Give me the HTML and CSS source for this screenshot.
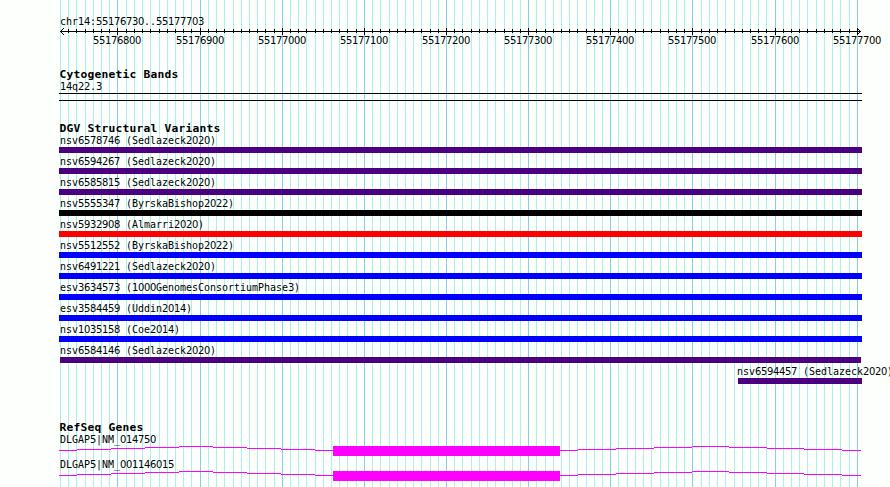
FILE: index.html
```html
<!DOCTYPE html>
<html lang="en">
<head>
<meta charset="utf-8">
<title>chr14:55176730..55177703</title>
<link rel="stylesheet" href="styles.css">
</head>
<body>
<main class="browser">
<svg class="grid" width="890" height="487" aria-hidden="true"><path id="minor" class="minor"/><path id="major" class="major"/></svg>
<section class="ruler">
<div class="label">chr14:55176730..55177703</div>
<svg class="axis" width="803" height="9" viewBox="59 27 803 9"><path id="ticks" class="ink"/><path class="ink" d="M60 31h801v1H60z"/><path class="ink" d="M61 30h1v1h-1zM62 29h1v1h-1zM63 28h1v1h-1zM61 32h1v1h-1zM62 33h1v1h-1zM63 34h1v1h-1zM859 30h1v1h-1zM858 29h1v1h-1zM857 28h1v1h-1zM859 32h1v1h-1zM858 33h1v1h-1zM857 34h1v1h-1z"/></svg>
<div class="scale" id="scale"></div>
</section>
<section class="track cyto">
<h2>Cytogenetic Bands</h2>
<div class="label">14q22.3</div>
<div class="band"></div>
</section>
<section class="track variants">
<h2>DGV Structural Variants</h2>
<div id="variants"></div>
</section>
<section class="track genes">
<h2>RefSeq Genes</h2>
<div id="genes"></div>
</section>
</main>
<script src="app.js"></script>
</body>
</html>
```
FILE: styles.css
```css
body { margin: 0; background: #fdfffc; overflow: hidden; }
.browser { position: relative; width: 890px; height: 487px; overflow: hidden; background: #fdfffc; color: #000; }
.grid { position: absolute; left: 0; top: 0; shape-rendering: crispEdges; }
.minor { fill: #afeeee; }
.major { fill: #87ceeb; }
.ruler, .track { position: relative; margin-left: 59px; width: 831px; }
.ruler { padding-top: 15px; height: 53px; }
.label { height: 12px; padding-left: 1px; font: 10px/12px "DejaVu Sans Mono", monospace; letter-spacing: -0.02px; white-space: pre; transform-origin: 0 10px; transform: translateY(1px) scaleY(1.12); }
.num { font-family: "DejaVu Sans", sans-serif; letter-spacing: -0.362px; }
.axis { display: block; }
.axis, .gene-shape { shape-rendering: crispEdges; }
.ink { fill: #000; }
.scale { display: flex; margin: -2px 0 0 33px; }
.scale .label { flex: none; width: var(--step); }
h2 { margin: 0; height: 12px; padding-left: 0.5px; font: bold 11.3px/12px "DejaVu Sans Mono", monospace; letter-spacing: 0.197px; white-space: pre; transform: translateY(1px); }
.cyto { height: 54px; }
.band { width: 803px; height: 6px; margin-top: 1px; border-top: 1px solid #000; border-bottom: 1px solid #000; }
.variants { height: 299px; }
.variant { height: 21px; }
.variant .label { height: 13px; }
.bar { height: 6px; width: 803px; }
.indigo { background: #4b0082; }
.black { background: #000; }
.red { background: #f00; }
.blue { background: #00f; }
.inset { margin-left: 1px; width: 801px; }
.late { margin-left: 677px; }
.late .label { padding-left: 1px; }
.late .bar { margin-left: 2px; width: 124px; }
.gene { height: 25px; }
.gene .label { height: 13px; }
.gene-shape { display: block; fill: #f0f; }
```
FILE: app.js
```js
const majors = [117, 200, 282, 364, 446, 528, 610, 692, 775, 857];
const minors = [60, 68, 76, 85, 93, 101, 109, 126, 134, 142, 150, 159, 167, 175, 183, 191, 208, 216, 224, 233, 241, 249, 257, 265, 274, 290, 298, 306, 315, 323, 331, 339, 347, 356, 372, 380, 389, 397, 405, 413, 421, 430, 438, 454, 462, 471, 479, 487, 495, 504, 512, 520, 536, 545, 553, 561, 569, 577, 586, 594, 602, 618, 627, 635, 643, 651, 660, 668, 676, 684, 701, 709, 717, 725, 734, 742, 750, 758, 766, 783, 791, 799, 807, 816, 824, 832, 840, 849];
const columns = (xs, y, h) => xs.map(x => `M${x} ${y}h1v${h}h-1z`).join("");
document.getElementById("minor").setAttribute("d", columns(minors, 0, 487));
document.getElementById("major").setAttribute("d", columns(majors, 0, 487));
document.getElementById("ticks").setAttribute("d", columns(minors.slice(1), 29, 4) + columns(majors, 28, 7));

document.getElementById("scale").innerHTML = majors.map((x, i) =>
  `<div class="label" style="--step:${(majors[i + 1] || x + 82) - x - 1}px">${55176800 + i * 100}</div>`).join("");

const variants = [
  ["nsv6578746 (Sedlazeck2020)", "indigo"],
  ["nsv6594267 (Sedlazeck2020)", "indigo"],
  ["nsv6585815 (Sedlazeck2020)", "indigo"],
  ["nsv5555347 (ByrskaBishop2022)", "black"],
  ["nsv5932908 (Almarri2020)", "red"],
  ["nsv5512552 (ByrskaBishop2022)", "blue"],
  ["nsv6491221 (Sedlazeck2020)", "blue"],
  ["esv3634573 (1000GenomesConsortiumPhase3)", "blue"],
  ["esv3584459 (Uddin2014)", "blue"],
  ["nsv1035158 (Coe2014)", "blue"],
  ["nsv6584146 (Sedlazeck2020)", "indigo inset"],
  ["nsv6594457 (Sedlazeck2020)", "indigo", "late"]
];
document.getElementById("variants").innerHTML = variants.map(([name, color, place = ""]) =>
  `<div class="variant ${place}"><div class="label">${name}</div><div class="bar ${color}"></div></div>`).join("");

// Introns: [start, end, rise above the baseline]
const introns = [[59, 77, 0], [77, 111, 1], [111, 145, 2], [145, 179, 3], [179, 213, 4], [213, 247, 3], [247, 281, 2], [281, 315, 1], [315, 333, 0],
  [560, 578, 0], [578, 616, 1], [616, 654, 2], [654, 692, 3], [692, 729, 4], [729, 767, 3], [767, 804, 2], [804, 842, 1], [842, 861, 0]];
const shape = introns.map(([a, b, r]) => `M${a} ${4 - r}H${b}v1H${a}z`).join("") + "M333 0H560V10H333z";
document.getElementById("genes").innerHTML = ["DLGAP5|NM_014750", "DLGAP5|NM_001146015"].map(name =>
  `<div class="gene"><div class="label">${name}</div><svg class="gene-shape" width="803" height="10" viewBox="59 0 803 10"><path d="${shape}"/></svg></div>`).join("");

// Digits use plain zeros on the same six-pixel pitch.
document.querySelectorAll(".label").forEach(el => {
  el.innerHTML = el.textContent.replace(/\d+/g, d => `<span class="num">${d}</span>`);
});
```
